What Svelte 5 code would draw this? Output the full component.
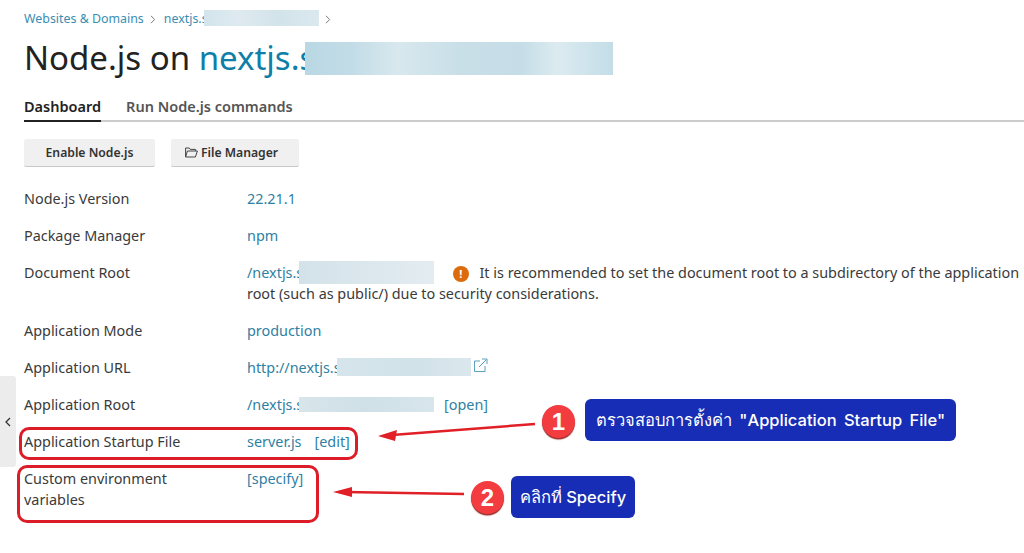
<script>
  const rows = [
    { label: 'Node.js Version', value: '22.21.1' },
    { label: 'Package Manager', value: 'npm' }
  ];
</script>

<div class="page">
  <div class="side"><svg width="6" height="10" viewBox="0 0 6 10"><path d="M5 1 1 5l4 4" fill="none" stroke="#333" stroke-width="1.3"/></svg></div>

  <nav class="crumbs">
    <a>Websites &amp; Domains</a>
    <svg class="chev" width="6" height="9" viewBox="0 0 6 9"><path d="m1 .8 3.6 3.7L1 8.200" fill="none" stroke="#777" stroke-width="1"/></svg>
    <a class="masked cm">nextjs.s<i class="blur b0"></i></a>
    <svg class="chev" width="6" height="9" viewBox="0 0 6 9"><path d="m1 .8 3.6 3.7L1 8.200" fill="none" stroke="#777" stroke-width="1"/></svg>
  </nav>

  <h1>Node.js on <a class="masked">nextjs.s<i class="blur b1"></i></a></h1>

  <div class="tabs">
    <span class="tab active">Dashboard</span>
    <span class="tab">Run Node.js commands</span>
  </div>

  <div class="actions">
    <button class="b-enable">Enable Node.js</button>
    <button class="b-files">
      <svg width="13" height="11" viewBox="0 0 13 11"><path d="M.6 10V1h3.600l1.100 1.400h5.300v1.500M.6 10l1.800-6h10l-2 6z" fill="none" stroke="#444" stroke-width="1"/></svg>
      File Manager
    </button>
  </div>

  <div class="rows">
    {#each rows as r}
      <div class="row"><div class="k">{r.label}</div><div class="v"><a>{r.value}</a></div></div>
    {/each}
    <div class="row doc">
      <div class="k">Document Root</div>
      <div class="v">
        <a class="masked root">/nextjs.s<i class="blur b2"></i></a>
        <span class="warn">!</span>
        It is recommended to set the document root to a subdirectory of the application root (such as public/) due to security considerations.
      </div>
    </div>
    <div class="row"><div class="k">Application Mode</div><div class="v"><a>production</a></div></div>
    <div class="row">
      <div class="k">Application URL</div>
      <div class="v"><a class="masked url">http://nextjs.s<i class="blur b3"></i></a><svg class="ext" width="15" height="15" viewBox="0 0 15 15"><path d="M7 3H1.500v10.500H12V8M6 9l7.500-7.500M9 1h5v5" fill="none" stroke="#5a9fbd" stroke-width="1"/></svg></div>
    </div>
    <div class="row">
      <div class="k">Application Root</div>
      <div class="v"><a class="masked rootb">/nextjs.s<i class="blur b4"></i></a><a>[open]</a></div>
    </div>
    <div class="row">
      <div class="k">Application Startup File</div>
      <div class="v"><a class="srv">server.js</a><a>[edit]</a></div>
    </div>
    <div class="row">
      <div class="k env">Custom environment variables</div>
      <div class="v"><a>[specify]</a></div>
    </div>
  </div>

  <div class="ring r1"></div>
  <div class="ring r2"></div>

  <svg class="arrows" width="1024" height="553" viewBox="0 0 1024 553">
    <path d="M535 424 392 435" stroke="#e01f26" stroke-width="2.500" fill="none"/>
    <path d="M378 436 397 430 395 441z" fill="#e01f26"/>
    <path d="M464 494 345 492" stroke="#e01f26" stroke-width="2.500" fill="none"/>
    <path d="M333 492 352 487 352 497z" fill="#e01f26"/>
  </svg>

  <div class="num n1">1</div>
  <div class="num n2">2</div>
  <div class="note t1">ตรวจสอบการตั้งค่า "Application Startup File"</div>
  <div class="note t2">คลิกที่ Specify</div>
</div>

<style>
  :global(body) { margin: 0; background: #fff; }
  .page {
    position: relative;
    width: 1024px;
    height: 553px;
    overflow: hidden;
    padding: 11px 0 0 24px;
    box-sizing: border-box;
    font-family: "Noto Sans", sans-serif;
    font-size: 14.4px;
    color: #3a3a3a;
  }
  a { color: #2f7fa3; }
  .side {
    position: absolute;
    left: 0; top: 376px;
    width: 16px; height: 91px;
    background: #ececec;
    border-radius: 0 3px 3px 0;
    display: flex;
    align-items: center;
    justify-content: center;
  }
  .crumbs {
    display: flex;
    align-items: center;
    font-size: 12.400px;
    line-height: 16px;
    height: 16px;
  }
  .crumbs a { color: #3a8db3; }
  .chev { margin-left: 6px; margin-right: 8px; }
  .cm { width: 159px; margin-right: -4px; }
  .masked { position: relative; display: inline-block; white-space: nowrap; }
  .blur {
    position: absolute;
    display: block;
    background: linear-gradient(90deg, #d3e4ec, #dfeaf0 30%, #d2e3ea 65%, #dbe9ef);
  }
  .b0 { left: 40px; top: -1px; width: 115px; height: 16px; }
  .b1 {
    left: 106px; top: 7px; width: 308px; height: 33px;
    background: linear-gradient(90deg, #b9d8e4, #c2dce7 15%, #d8e8ee 30%, #c9dfe8 50%, #c5dde7 70%, #dcebf0 82%, #c3dde7);
  }
  .b2 { left: 52px; top: -1px; width: 135px; height: 23px; background: linear-gradient(90deg, #d3e2e9, #e3ecf1); }
  .b3 { left: 90px; top: 1px; width: 134px; height: 18px; background: linear-gradient(90deg, #d6e5ec, #d2e2e9 60%, #dbe7ed); }
  .b4 { left: 52px; top: 3px; width: 135px; height: 15px; background: linear-gradient(90deg, #d8e5eb, #cfe0e7 50%, #d8e6ec); }
  h1 {
    margin: 8px 0 0;
    font-size: 33px;
    font-weight: 400;
    line-height: 46px;
    color: #222;
  }
  h1 a { color: #0f7ea8; }
  .tabs {
    display: flex;
    gap: 25px;
    margin-top: 15px;
    border-bottom: 2px solid #ccc;
    font-weight: 600;
    font-size: 14.500px;
    height: 24px;
  }
  .tab { line-height: 20px; height: 24px; color: #555; }
  .tab.active { color: #222; border-bottom: 2px solid #222; }
  .actions { display: flex; gap: 16px; margin-top: 17px; }
  button {
    font: 600 12.200px "Noto Sans", sans-serif;
    color: #333;
    height: 28px;
    padding: 0;
    border: 0;
    background: #f0f0f0;
    border-bottom: 1px solid #c8c8c8;
    border-radius: 2px;
    display: flex;
    align-items: center;
    justify-content: center;
    gap: 3px;
  }
  .b-enable { width: 131px; }
  .b-files { width: 128px; justify-content: flex-start; padding-left: 14px; }
  .rows { margin-top: 21px; display: flex; flex-direction: column; gap: 16px; width: 1000px; }
  .row { display: flex; line-height: 21px; }
  .k { width: 223px; flex: none; }
  .k.env { width: 170px; margin-right: 53px; }
  .v { flex: 1; }
  .root { width: 202px; }
  .warn {
    display: inline-block;
    width: 16px; height: 16px;
    border-radius: 50%;
    background: #dc6b0c;
    color: #fff;
    font-size: 11px;
    font-weight: 700;
    line-height: 16px;
    text-align: center;
    margin-right: 7px;
    vertical-align: 0;
  }
  .url { width: 226px; }
  .ext { vertical-align: 0; }
  .rootb { width: 197px; }
  .srv { margin-right: 13px; }
  .ring {
    position: absolute;
    border: 3px solid #dc1c27;
    border-radius: 10px;
    box-sizing: border-box;
  }
  .r1 { left: 19px; top: 427px; width: 339px; height: 33px; }
  .r2 { left: 17px; top: 465px; width: 302px; height: 58px; }
  .arrows { position: absolute; left: 0; top: 0; pointer-events: none; }
  .num {
    position: absolute;
    width: 33px; height: 33px;
    border-radius: 50%;
    background: #f23c3f;
    color: #fff;
    font: 700 24px/33px "Liberation Sans", sans-serif;
    text-align: center;
    box-shadow: 0 1.500px 1px #9a2a2a;
  }
  .n1 { left: 542px; top: 405px; }
  .n2 { left: 471px; top: 481px; }
  .note {
    position: absolute;
    background: #182db5;
    color: #fff;
    border-radius: 6px;
    display: flex;
    align-items: center;
    justify-content: center;
    font: 500 16.500px Inter, "DejaVu Sans", sans-serif;
    white-space: nowrap;
    box-sizing: border-box;
  }
  .t1 { left: 585px; top: 399px; width: 371px; height: 42px; word-spacing: 3px; }
  .t2 { left: 511px; top: 476px; width: 124px; height: 42px; }
</style>
